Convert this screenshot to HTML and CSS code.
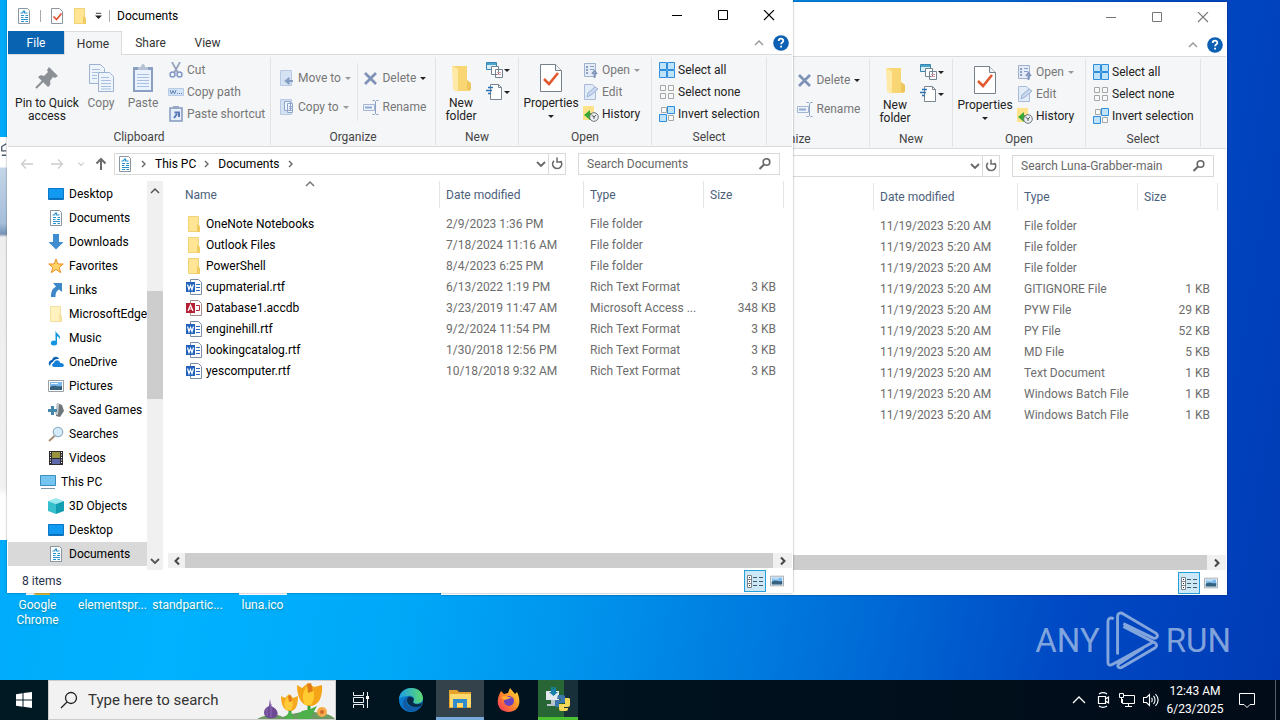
FILE: index.html
```html
<!DOCTYPE html>
<html lang="en">
<head>
<meta charset="utf-8">
<title>Documents</title>
<link rel="stylesheet" href="styles.css">
</head>
<body>
<svg class="sprite" aria-hidden="true">
  <symbol id="doc" viewBox="0 0 16 16"><path d="M2.500 .5h9l2 2v13h-11z" fill="#fff" stroke="#8a97a3"/><path d="M4.500 5h2l1-2h1v2h3M5 7.500h3M9.500 7.500h2.500M5 9.500h2.500M9 9.500h3M5 11.500h7M5 13.500h3M9.500 13.500h2.500" fill="none" stroke="#2a93cf" stroke-width="1.200"/></symbol>
  <symbol id="checkdoc" viewBox="0 0 24 30"><path d="M1.500 1.500h15l6 6v21h-21z" fill="#fff" stroke="#75808a"/><path d="M16.500 1.500v6h6" fill="#eef1f3" stroke="#75808a"/><path d="M5 16l5 5 9-11" fill="none" stroke="#e0592f" stroke-width="2.600"/></symbol>
  <symbol id="smallcheck" viewBox="0 0 16 16"><path d="M2.500 .5h8l3 3v12h-11z" fill="#fff" stroke="#8d969e"/><path d="M4.500 8.500l3 3 5-6" fill="none" stroke="#e2502f" stroke-width="1.700"/></symbol>
  <symbol id="folder" viewBox="0 0 16 16"><path d="M2 0h10v16H2z" fill="#ffe594"/><path d="M2.500 .5h10v15h-10z" fill="none" stroke="#f1d276"/><path d="M11 8l3 2v6h-3z" fill="#efcb62"/></symbol>
  <symbol id="bigfolder" viewBox="0 0 22 28"><path d="M2 1h15v15l3 6v4H5z" fill="#f7d673"/><path d="M2 1l6 3v23l-5-2.500z" fill="#ffe9a6"/><path d="M17 15l4 3v7h-4z" fill="#eec55a"/></symbol>
  <symbol id="pin" viewBox="0 0 24 24"><path d="M14 1l9 9-3 2-2-1-3 4c1 3 0 5-2 6L3 11c2-2 4-2 6-1l4-4-1-2z" fill="#8b9097"/><path d="M8 15L1 22" stroke="#8b9097" stroke-width="2"/></symbol>
  <symbol id="copy" viewBox="0 0 26 30"><g fill="#eef4fc" stroke="#9db2d3"><path d="M1.500 1.500h11l4 4v15h-15z"/><path d="M10.500 9.500h11l4 4v15h-15z"/></g><path d="M4 6.500h8M4 9.500h6M4 12.500h5M4 15.500h5M13 14.500h8M13 17.500h10M13 20.500h10M13 23.500h10M13 26h10" stroke="#a9bfdf"/></symbol>
  <symbol id="paste" viewBox="0 0 22 30"><path d="M1 4h20v25H1z" fill="#8b9fc2"/><path d="M3 7h16v20H3z" fill="#eaf2fd"/><path d="M5 11.500h12M5 14.500h12M5 17.500h12M5 20.500h12M5 23.500h12" stroke="#aac0df"/><path d="M6 4h3c0-4 4-4 4 0h3v3H6z" fill="#b6c2d5"/></symbol>
  <symbol id="cut" viewBox="0 0 16 16"><path d="M4 0l6 11M12 0L6 11" stroke="#93a2bd" stroke-width="1.700"/><circle cx="4.500" cy="12.500" r="2.500" fill="none" stroke="#8098c4" stroke-width="1.500"/><circle cx="11.500" cy="12.500" r="2.500" fill="none" stroke="#8098c4" stroke-width="1.500"/></symbol>
  <symbol id="path" viewBox="0 0 16 16"><path d="M.5 4.500h15v7H.5z" fill="#d4e4f7" stroke="#b7cbe6"/><path d="M2 6l1.500 4L5 6.500 6.500 10 8 6M9 9.500h1M11 9.500h1M13 9.500h1" fill="none" stroke="#6283b5"/></symbol>
  <symbol id="shortcut" viewBox="0 0 16 16"><path d="M2 2h12v13H2z" fill="#e5eefa" stroke="#8299bf" stroke-width="1.500"/><path d="M5 0h6v3H5z" fill="#97a8c6"/><path d="M6 12l3-4M6.500 6.500H11V11" stroke="#5678b4" stroke-width="2" fill="none"/></symbol>
  <symbol id="moveto" viewBox="0 0 16 16"><path d="M1 1h12v15H1z" fill="#d5e2f3"/><path d="M1.500 .5h11v15h-11z" fill="none" stroke="#b9cbe3"/><path d="M14 11H8M10.500 8L7 11l3.500 3" fill="none" stroke="#859dc3" stroke-width="2.200"/></symbol>
  <symbol id="copyto" viewBox="0 0 16 16"><path d="M1.500 .5h11v15h-11z" fill="#d5e2f3" stroke="#b9cbe3"/><path d="M5.500 2.500h6v9h-6zM8.500 4.500h5v9h-5z" fill="#f0f5fc" stroke="#8ea6cb"/><path d="M10 7.500h3M10 9.500h3M10 11.500h3" stroke="#8ea6cb"/></symbol>
  <symbol id="delete" viewBox="0 0 16 16"><path d="M2 3l11 11M13 3L2 14" stroke="#7f93b8" stroke-width="2.800"/></symbol>
  <symbol id="rename" viewBox="0 0 16 16"><path d="M.5 5.500h11v6H.5z" fill="#eef3fb" stroke="#a4b6d2"/><path d="M2 7.500h7v2H2z" fill="#91aad2"/><path d="M9.500 1.500h2l1 1 1-1h2M12.500 2.500v12M9.500 15.500h2l1-1 1 1h2" fill="none" stroke="#8ba2c8"/></symbol>
  <symbol id="newitem" viewBox="0 0 18 18"><path d="M.5 1.500h10v7H.5z" fill="#d9eff8" stroke="#3784b0"/><path d="M1 2h9v2H1z" fill="#4ba4cc"/><path d="M5.500 5.500h7v8h-7zM9.500 8.500h7v8h-7z" fill="#fff" stroke="#728494"/><path d="M11 11.500h4M11 13.500h4" stroke="#d398a5"/></symbol>
  <symbol id="easy" viewBox="0 0 18 18"><path d="M4.500 1.500h8l3 3v12h-11z" fill="#fff" stroke="#7a8792"/><path d="M12.500 1.500v3h3" fill="none" stroke="#7a8792"/><path d="M2 4.500h5M0 7.500h6M2 10.500h3" stroke="#2973b6" stroke-width="1.500"/></symbol>
  <symbol id="open" viewBox="0 0 16 16"><path d="M1.500 1.500h11v13h-11z" fill="#e5ecf6" stroke="#9fb1cd"/><path d="M3 4h2v2H3zM3 7h2v2H3zM3 10h2v2H3zM7 4h4v1H7zM7 7h4v1H7z" fill="#87a0c8"/><path d="M11.500 16v-5M9 12l2.500-3L14 12" stroke="#7f94bb" stroke-width="1.800" fill="none"/></symbol>
  <symbol id="edit" viewBox="0 0 16 16"><path d="M1.500 .5h8l3 3v12h-11z" fill="#e2ebf8" stroke="#a9bbd8"/><path d="M4 13l1-4 7-6 3 2-7 6z" fill="#c8d8ee" stroke="#9db2d4"/></symbol>
  <symbol id="history" viewBox="0 0 16 16"><path d="M0 0h11v14H0z" fill="#ffe38a"/><path d="M1 9l6-5v3c2 0 4 1 4 3l-4 1v3z" fill="#38a935"/><circle cx="11" cy="11" r="4.300" fill="#eceff1" stroke="#6b7479"/><path d="M8.500 9l2.500 2 2-2M11 11v2" fill="none" stroke="#555"/></symbol>
  <symbol id="selall" viewBox="0 0 16 16"><path d="M.5 .5h7v7h-7zM8.500 .5h7v7h-7zM.5 8.500h7v7h-7zM8.500 8.500h7v7h-7z" fill="#bfe3fb" stroke="#2f8ddb"/></symbol>
  <symbol id="selnone" viewBox="0 0 16 16"><path d="M1.500 1.500h5v5h-5zM9.500 1.500h5v5h-5zM1.500 9.500h5v5h-5zM9.500 9.500h5v5h-5z" fill="#fafafa" stroke="#a6a6a6"/></symbol>
  <symbol id="selinv" viewBox="0 0 16 16"><path d="M2.500 1.500h5v5h-5zM9.500 9.500h5v5h-5z" fill="#fafafa" stroke="#a6a6a6"/><path d="M8.500 .5h7v7h-7zM.5 8.500h7v7h-7z" fill="#bfe3fb" stroke="#2f8ddb"/></symbol>
  <symbol id="min" viewBox="0 0 12 12"><path d="M1 5.500h10" stroke="currentColor"/></symbol>
  <symbol id="max" viewBox="0 0 12 12"><path d="M1.500 .5h9v9h-9z" fill="none" stroke="currentColor"/></symbol>
  <symbol id="close" viewBox="0 0 12 12"><path d="M1 0l10 10M11 0L1 10" stroke="currentColor" stroke-width="1.100"/></symbol>
  <symbol id="up" viewBox="0 0 12 12"><path d="M2 8l4-4 4 4" fill="none" stroke="currentColor" stroke-width="1.500"/></symbol>
  <symbol id="down" viewBox="0 0 12 12"><path d="M2 4l4 4 4-4" fill="none" stroke="currentColor" stroke-width="1.800"/></symbol>
  <symbol id="left" viewBox="0 0 12 12"><path d="M8 2.500L4.500 6 8 9.500" fill="none" stroke="currentColor" stroke-width="2"/></symbol>
  <symbol id="right" viewBox="0 0 12 12"><path d="M4 2.500L7.500 6 4 9.500" fill="none" stroke="currentColor" stroke-width="2"/></symbol>
  <symbol id="crumb" viewBox="0 0 12 12"><path d="M4 3l3 3-3 3" fill="none" stroke="currentColor" stroke-width="1.400"/></symbol>
  <symbol id="caret" viewBox="0 0 8 8"><path d="M1 3h6L4 6z" fill="currentColor"/></symbol>
  <symbol id="qat" viewBox="0 0 8 10"><path d="M1 2.500h6" stroke="#222"/><path d="M0 5h8L4 9z" fill="#222"/></symbol>
  <symbol id="back" viewBox="0 0 16 16"><path d="M14 8H3M7 3.500L2.500 8 7 12.500" fill="none" stroke="currentColor" stroke-width="1.300"/></symbol>
  <symbol id="forward" viewBox="0 0 16 16"><path d="M2 8h11M9 3.500L13.500 8 9 12.500" fill="none" stroke="currentColor" stroke-width="1.300"/></symbol>
  <symbol id="upone" viewBox="0 0 16 16"><path d="M8 14V3M3.500 7.500L8 3l4.500 4.500" fill="none" stroke="#6b6b6b" stroke-width="2"/></symbol>
  <symbol id="refresh" viewBox="0 0 16 16"><path d="M11.500 5A4.500 4.500 0 1 1 5 4.800" fill="none" stroke="#6a6a6a" stroke-width="1.700"/><path d="M8 1.500V6H3.500" fill="none" stroke="#6a6a6a" stroke-width="1.500" transform="matrix(-1 0 0 1 16 0)"/></symbol>
  <symbol id="glass" viewBox="0 0 16 16"><circle cx="9.500" cy="6" r="3.300" fill="none" stroke="#666" stroke-width="1.600"/><path d="M7 8.500L2.500 13" stroke="#666" stroke-width="2"/></symbol>
  <symbol id="help" viewBox="0 0 16 16"><circle cx="8" cy="8" r="7.800" fill="#0b60b4"/><path d="M5.700 6c0-3 4.600-3 4.600-.3 0 1.600-2.200 1.700-2.200 3.600" fill="none" stroke="#fff" stroke-width="1.800"/><path d="M7.200 10.700h1.800v1.800H7.200z" fill="#fff"/></symbol>
  <symbol id="desk" viewBox="0 0 16 16"><path d="M.5 2.500h15v11H.5z" fill="#129af2" stroke="#0c75c4"/><path d="M1 12h14v1H1z" fill="#0a69b5"/></symbol>
  <symbol id="downarrow" viewBox="0 0 16 16"><path d="M5 0h6v8h4.500L8 15.500.5 8H5z" fill="#3f8ccf"/></symbol>
  <symbol id="star" viewBox="0 0 16 16"><path d="M8 1l2 5h5.300l-4.100 3.400 1.500 5.300L8 11.500l-4.700 3.200 1.500-5.300L.7 6H6z" fill="#ffd56a" stroke="#ed8d24"/></symbol>
  <symbol id="link" viewBox="0 0 16 16"><path d="M5 1h9v9l-3-2.500c-3 2-3.500 4-3.500 7.500H3c0-5 1-8 5-10.500z" fill="#3d86c8"/></symbol>
  <symbol id="palefolder" viewBox="0 0 16 16"><path d="M2.500 .5h10v15h-10z" fill="#fff2bf" stroke="#f3e1a0"/><path d="M11 8l3 2v6h-3z" fill="#f6e2a0"/></symbol>
  <symbol id="music" viewBox="0 0 16 16"><path d="M7.500 0c0 4 5.500 4 4.500 9.500-1-2.500-2-3-3-3V13H7.500z" fill="#1396e0"/><ellipse cx="6" cy="13" rx="3.200" ry="2.500" fill="#1396e0"/></symbol>
  <symbol id="cloud" viewBox="0 0 16 16"><path d="M2 12C-1 9 2 6 4 6c1-4 6-4 7-1-4-.5-6 2-6 3-2 .5-2.500 2-3 4z" fill="#0a62b8"/><path d="M6 13c-3-.5-2-4 0-4 1-4 6-3 6 0 4-.5 5 3 2.500 4z" fill="#1480d8"/></symbol>
  <symbol id="picture" viewBox="0 0 16 16"><path d="M.5 2.500h15v11H.5z" fill="#fff" stroke="#9aa0a6"/><path d="M2 4h12v8H2z" fill="#79b9ec"/><path d="M2 9c4-3 6 0 12-1v4H2z" fill="#35617c"/><path d="M3 5h7v1H3z" fill="#e8f5ff"/></symbol>
  <symbol id="games" viewBox="0 0 16 16"><path d="M9 1l5 2 2 6-4 6-4-1z" fill="#6e767c"/><path d="M9 1l2 1-1 11-3-1z" fill="#c2c8cc"/><path d="M0 7h3V4h3v3h3v3H6v3H3v-3H0z" fill="#4387ac"/></symbol>
  <symbol id="search2" viewBox="0 0 16 16"><circle cx="10" cy="6" r="4.700" fill="#d5edfb" stroke="#94b2c5" stroke-width="1.300"/><path d="M6.500 10L1 15" stroke="#a98d76" stroke-width="2"/></symbol>
  <symbol id="video" viewBox="0 0 16 16"><path d="M1 1h14v14H1z" fill="#2d2d30"/><path d="M4 2h8v6H4z" fill="#99933e"/><path d="M4 9h8v5H4z" fill="#5f68a8"/><path d="M2.500 2v12M13.500 2v12" stroke="#fff" stroke-dasharray="1 1.500"/></symbol>
  <symbol id="pc" viewBox="0 0 16 16"><path d="M.5 1.500h15v10H.5z" fill="#75c5f3" stroke="#3b8cb8"/><path d="M1 14h14v1H1z" fill="#7d99a9"/></symbol>
  <symbol id="cube" viewBox="0 0 16 16"><path d="M8 0l8 3-8 3-8-3z" fill="#9ce8ef"/><path d="M0 3l8 3v10l-8-3z" fill="#37bfce"/><path d="M16 3L8 6v10l8-3z" fill="#129eb2"/></symbol>
  <symbol id="word" viewBox="0 0 16 16"><path d="M4.500 .5h8l3 3v12h-11z" fill="#fff" stroke="#7d8da5"/><path d="M10 5.500h4M10 8.500h4M10 11.500h4" stroke="#2f68c0"/><path d="M0 3h9v10H0z" fill="#2262bd"/><path d="M1.500 5.500L3 10.500l1.500-4 1.500 4 1.500-5" fill="none" stroke="#fff" stroke-width="1.200"/></symbol>
  <symbol id="access" viewBox="0 0 16 16"><path d="M4.500 .5h8l3 3v12h-11z" fill="#fff" stroke="#a58a8d"/><path d="M10 5.500h3.500v5H10" fill="none" stroke="#b52b3a"/><path d="M0 3h9v10H0z" fill="#b51f34"/><path d="M2 11l2.500-6L7 11M3 9h3" fill="none" stroke="#fff" stroke-width="1.200"/></symbol>
  <symbol id="details" viewBox="0 0 18 16"><path d="M1.500 2.500h4v12h-4zM1.500 6.500h4M1.500 10.500h4" fill="#fff" stroke="#7b8289"/><path d="M7 4.500h4M13 4.500h4M7 8.500h4M13 8.500h4M7 12.500h4M13 12.500h4" stroke="#455a67"/><path d="M3 4h1v1H3zM3 8h1v1H3zM3 12h1v1H3z" fill="#333"/></symbol>
</svg>

<main class="desktop">
  <section class="sliver" aria-hidden="true"><svg viewBox="0 0 8 16"><path d="M7 1L2 4v5h5M2 14h5" fill="none" stroke="#4b5b69" stroke-width="1.500"/></svg></section>

  <div class="shortcuts">
    <div class="shortcut chrome">Google<br>Chrome</div>
    <div class="shortcut">elementspr...</div>
    <div class="shortcut">standpartic...</div>
    <div class="shortcut luna">luna.ico</div>
  </div>

  <div class="watermark"><span>ANY</span><svg viewBox="0 0 56 62"><path d="M8 8c-4-2-6 0-6 3v42c0 3 2 4 5 2l42-23M12 45V6c0-4 3-5 6-3l34 20c3 3 0 6-3 5L18 13M18 16l33 17c2 2 2 3 0 5L17 58c-3 2-6 0-4-3L39 38" fill="none" stroke="currentColor" stroke-width="3"/></svg><span>RUN</span></div>

  <section class="window behind" aria-label="Luna-Grabber-main">
    <header class="titlebar">
      <div class="winbuttons"><button aria-label="Minimize"><svg><use href="#min"/></svg></button><button aria-label="Maximize"><svg><use href="#max"/></svg></button><button aria-label="Close"><svg><use href="#close"/></svg></button></div>
    </header>
    <nav class="tabs"><div class="tabend"><svg class="i12"><use href="#up"/></svg><button aria-label="Help"><svg class="i16"><use href="#help"/></svg></button></div></nav>
    <div class="ribbon">
      <section class="group organize"><div class="body">
        <div class="stack wide"></div>
        <div class="stack wide second"><button class="dim"><svg class="i16"><use href="#delete"/></svg>Delete<svg class="i8 dark"><use href="#caret"/></svg></button><button class="dim"><svg class="i16"><use href="#rename"/></svg>Rename</button></div>
      </div><h2>Organize</h2></section>
      <section class="group new"><div class="body">
        <button class="big"><svg class="foldericon"><use href="#bigfolder"/></svg><span>New<br>folder</span></button>
        <div class="stack"><button aria-label="New item"><svg class="i18"><use href="#newitem"/></svg><svg class="i8"><use href="#caret"/></svg></button><button aria-label="Easy access"><svg class="i18"><use href="#easy"/></svg><svg class="i8"><use href="#caret"/></svg></button></div>
      </div><h2>New</h2></section>
      <section class="group opengroup"><div class="body">
        <button class="big"><svg class="largeicon"><use href="#checkdoc"/></svg><span>Properties</span><svg class="i8"><use href="#caret"/></svg></button>
        <div class="stack"><button class="dim"><svg class="i16"><use href="#open"/></svg>Open<svg class="i8"><use href="#caret"/></svg></button><button class="dim"><svg class="i16"><use href="#edit"/></svg>Edit</button><button><svg class="i16"><use href="#history"/></svg>History</button></div>
      </div><h2>Open</h2></section>
      <section class="group select"><div class="body">
        <div class="stack"><button><svg class="i16"><use href="#selall"/></svg>Select all</button><button><svg class="i16"><use href="#selnone"/></svg>Select none</button><button><svg class="i16"><use href="#selinv"/></svg>Invert selection</button></div>
      </div><h2>Select</h2></section>
    </div>
    <div class="location">
      <div class="address"><div class="crumbs"></div><button class="drop" aria-label="Previous locations"><svg class="i12"><use href="#down"/></svg></button><button class="refresh" aria-label="Refresh"><svg class="i16"><use href="#refresh"/></svg></button></div>
      <label class="find"><input type="search" aria-label="Search" placeholder="Search Luna-Grabber-main"><svg class="i16"><use href="#glass"/></svg></label>
    </div>
    <div class="content">
      <div class="tree"></div><div class="gutter"></div>
      <div class="files">
        <table>
          <thead><tr><th class="name"></th><th class="date">Date modified</th><th class="type">Type</th><th class="size">Size</th></tr></thead>
          <tbody>
            <tr><td></td><td>11/19/2023 5:20 AM</td><td>File folder</td><td></td></tr>
            <tr><td></td><td>11/19/2023 5:20 AM</td><td>File folder</td><td></td></tr>
            <tr><td></td><td>11/19/2023 5:20 AM</td><td>File folder</td><td></td></tr>
            <tr><td></td><td>11/19/2023 5:20 AM</td><td>GITIGNORE File</td><td>1 KB</td></tr>
            <tr><td></td><td>11/19/2023 5:20 AM</td><td>PYW File</td><td>29 KB</td></tr>
            <tr><td></td><td>11/19/2023 5:20 AM</td><td>PY File</td><td>52 KB</td></tr>
            <tr><td></td><td>11/19/2023 5:20 AM</td><td>MD File</td><td>5 KB</td></tr>
            <tr><td></td><td>11/19/2023 5:20 AM</td><td>Text Document</td><td>1 KB</td></tr>
            <tr><td></td><td>11/19/2023 5:20 AM</td><td>Windows Batch File</td><td>1 KB</td></tr>
            <tr><td></td><td>11/19/2023 5:20 AM</td><td>Windows Batch File</td><td>1 KB</td></tr>
          </tbody>
        </table>
        <div class="hscroll"><svg><use href="#left"/></svg><div class="thumb"></div><svg><use href="#right"/></svg></div>
      </div>
    </div>
    <footer class="status"><span></span><button class="view on" aria-label="Details view"><svg class="i18"><use href="#details"/></svg></button><button class="view" aria-label="Large icons view"><svg class="i16"><use href="#picture"/></svg></button></footer>
  </section>

  <section class="window front" aria-label="Documents">
    <header class="titlebar">
      <svg class="i16"><use href="#doc"/></svg><i class="sep"></i><svg class="i16 quick"><use href="#smallcheck"/></svg><svg class="i16 quick"><use href="#folder"/></svg><svg class="qat"><use href="#qat"/></svg><i class="sep last"></i><h1>Documents</h1>
      <div class="winbuttons"><button aria-label="Minimize"><svg><use href="#min"/></svg></button><button aria-label="Maximize"><svg><use href="#max"/></svg></button><button aria-label="Close"><svg><use href="#close"/></svg></button></div>
    </header>
    <nav class="tabs"><button class="file">File</button><button class="active">Home</button><button class="plain">Share</button><button class="plain">View</button><div class="tabend"><svg class="i12"><use href="#up"/></svg><button aria-label="Help"><svg class="i16"><use href="#help"/></svg></button></div></nav>
    <div class="ribbon">
      <section class="group clipboard"><div class="body">
        <button class="big pin"><svg class="largeicon"><use href="#pin"/></svg><span>Pin to Quick<br>access</span></button>
        <button class="big dim clip"><svg class="largeicon"><use href="#copy"/></svg><span>Copy</span></button>
        <button class="big dim clip"><svg class="largeicon"><use href="#paste"/></svg><span>Paste</span></button>
        <div class="stack"><button class="dim"><svg class="i16"><use href="#cut"/></svg>Cut</button><button class="dim"><svg class="i16"><use href="#path"/></svg>Copy path</button><button class="dim"><svg class="i16"><use href="#shortcut"/></svg>Paste shortcut</button></div>
      </div><h2>Clipboard</h2></section>
      <section class="group organize"><div class="body">
        <div class="stack wide"><button class="dim"><svg class="i16"><use href="#moveto"/></svg>Move to<svg class="i8"><use href="#caret"/></svg></button><button class="dim"><svg class="i16"><use href="#copyto"/></svg>Copy to<svg class="i8"><use href="#caret"/></svg></button></div>
        <div class="stack wide second"><button class="dim"><svg class="i16"><use href="#delete"/></svg>Delete<svg class="i8 dark"><use href="#caret"/></svg></button><button class="dim"><svg class="i16"><use href="#rename"/></svg>Rename</button></div>
      </div><h2>Organize</h2></section>
      <section class="group new"><div class="body">
        <button class="big"><svg class="foldericon"><use href="#bigfolder"/></svg><span>New<br>folder</span></button>
        <div class="stack"><button aria-label="New item"><svg class="i18"><use href="#newitem"/></svg><svg class="i8"><use href="#caret"/></svg></button><button aria-label="Easy access"><svg class="i18"><use href="#easy"/></svg><svg class="i8"><use href="#caret"/></svg></button></div>
      </div><h2>New</h2></section>
      <section class="group opengroup"><div class="body">
        <button class="big"><svg class="largeicon"><use href="#checkdoc"/></svg><span>Properties</span><svg class="i8"><use href="#caret"/></svg></button>
        <div class="stack"><button class="dim"><svg class="i16"><use href="#open"/></svg>Open<svg class="i8"><use href="#caret"/></svg></button><button class="dim"><svg class="i16"><use href="#edit"/></svg>Edit</button><button><svg class="i16"><use href="#history"/></svg>History</button></div>
      </div><h2>Open</h2></section>
      <section class="group select"><div class="body">
        <div class="stack"><button><svg class="i16"><use href="#selall"/></svg>Select all</button><button><svg class="i16"><use href="#selnone"/></svg>Select none</button><button><svg class="i16"><use href="#selinv"/></svg>Invert selection</button></div>
      </div><h2>Select</h2></section>
    </div>
    <div class="location">
      <div class="arrows"><button aria-label="Back"><svg class="i16"><use href="#back"/></svg></button><button aria-label="Forward"><svg class="i16"><use href="#forward"/></svg></button><button class="recent" aria-label="Recent"><svg class="i8"><use href="#down"/></svg></button><button aria-label="Up"><svg class="i16"><use href="#upone"/></svg></button></div>
      <div class="address"><div class="crumbs"><svg class="i16"><use href="#doc"/></svg><svg class="i12"><use href="#crumb"/></svg><a href="#">This PC</a><svg class="i12"><use href="#crumb"/></svg><a href="#">Documents</a><svg class="i12"><use href="#crumb"/></svg></div><button class="drop" aria-label="Previous locations"><svg class="i12"><use href="#down"/></svg></button><button class="refresh" aria-label="Refresh"><svg class="i16"><use href="#refresh"/></svg></button></div>
      <label class="find"><input type="search" aria-label="Search" placeholder="Search Documents"><svg class="i16"><use href="#glass"/></svg></label>
    </div>
    <div class="content">
      <nav class="tree">
        <a href="#"><svg class="i16"><use href="#desk"/></svg>Desktop</a>
        <a href="#"><svg class="i16"><use href="#doc"/></svg>Documents</a>
        <a href="#"><svg class="i16"><use href="#downarrow"/></svg>Downloads</a>
        <a href="#"><svg class="i16"><use href="#star"/></svg>Favorites</a>
        <a href="#"><svg class="i16"><use href="#link"/></svg>Links</a>
        <a href="#"><svg class="i16"><use href="#palefolder"/></svg>MicrosoftEdge</a>
        <a href="#"><svg class="i16"><use href="#music"/></svg>Music</a>
        <a href="#"><svg class="i16"><use href="#cloud"/></svg>OneDrive</a>
        <a href="#"><svg class="i16"><use href="#picture"/></svg>Pictures</a>
        <a href="#"><svg class="i16"><use href="#games"/></svg>Saved Games</a>
        <a href="#"><svg class="i16"><use href="#search2"/></svg>Searches</a>
        <a href="#"><svg class="i16"><use href="#video"/></svg>Videos</a>
        <a href="#" class="root"><svg class="i16"><use href="#pc"/></svg>This PC</a>
        <a href="#"><svg class="i16"><use href="#cube"/></svg>3D Objects</a>
        <a href="#"><svg class="i16"><use href="#desk"/></svg>Desktop</a>
        <a href="#" class="current"><svg class="i16"><use href="#doc"/></svg>Documents</a>
      </nav>
      <div class="vscroll"><svg><use href="#up"/></svg><div class="track"><div class="thumb"></div></div><svg><use href="#down"/></svg></div>
      <div class="files">
        <table>
          <thead><tr><th class="name">Name<svg class="sort"><use href="#up"/></svg></th><th class="date">Date modified</th><th class="type">Type</th><th class="size">Size</th></tr></thead>
          <tbody>
            <tr><td><svg class="i16"><use href="#folder"/></svg>OneNote Notebooks</td><td>2/9/2023 1:36 PM</td><td>File folder</td><td></td></tr>
            <tr><td><svg class="i16"><use href="#folder"/></svg>Outlook Files</td><td>7/18/2024 11:16 AM</td><td>File folder</td><td></td></tr>
            <tr><td><svg class="i16"><use href="#folder"/></svg>PowerShell</td><td>8/4/2023 6:25 PM</td><td>File folder</td><td></td></tr>
            <tr><td><svg class="i16"><use href="#word"/></svg>cupmaterial.rtf</td><td>6/13/2022 1:19 PM</td><td>Rich Text Format</td><td>3 KB</td></tr>
            <tr><td><svg class="i16"><use href="#access"/></svg>Database1.accdb</td><td>3/23/2019 11:47 AM</td><td>Microsoft Access ...</td><td>348 KB</td></tr>
            <tr><td><svg class="i16"><use href="#word"/></svg>enginehill.rtf</td><td>9/2/2024 11:54 PM</td><td>Rich Text Format</td><td>3 KB</td></tr>
            <tr><td><svg class="i16"><use href="#word"/></svg>lookingcatalog.rtf</td><td>1/30/2018 12:56 PM</td><td>Rich Text Format</td><td>3 KB</td></tr>
            <tr><td><svg class="i16"><use href="#word"/></svg>yescomputer.rtf</td><td>10/18/2018 9:32 AM</td><td>Rich Text Format</td><td>3 KB</td></tr>
          </tbody>
        </table>
        <div class="hscroll"><svg><use href="#left"/></svg><div class="thumb"></div><svg><use href="#right"/></svg></div>
      </div>
    </div>
    <footer class="status"><span>8 items</span><button class="view on" aria-label="Details view"><svg class="i18"><use href="#details"/></svg></button><button class="view" aria-label="Large icons view"><svg class="i16"><use href="#picture"/></svg></button></footer>
  </section>
</main>

<footer class="taskbar">
  <button class="start" aria-label="Start"><svg class="i16" viewBox="0 0 16 16"><path d="M0 2.300L6.500 1.300V7.500H0zM7.500 1.100L16 0v7.500H7.500zM0 8.500h6.500v6.200L0 13.700zM7.500 8.500H16V16l-8.500-1.200z" fill="#fff"/></svg></button>
  <label class="searchbox"><svg class="i18" viewBox="0 0 18 18"><circle cx="11" cy="7" r="5.500" fill="none" stroke="#222" stroke-width="1.300"/><path d="M7 11l-6 6" stroke="#222" stroke-width="1.300"/></svg><input type="text" aria-label="Type here to search" placeholder="Type here to search">
    <svg class="flowers" viewBox="0 0 78 38"><path d="M0 38c10-5 18-6 26-2 10-6 44-8 52 2z" fill="#6c9a61"/><path d="M33 37V22M52 37V18" stroke="#33a042" stroke-width="3"/><path d="M27 38l6-8 5 8zM40 38c1-7 5-9 11-9l9-4-7 13z" fill="#4db04a"/><path d="M13 18l1 7c8 3 9 11 2 12-10 2-12-9-4-12z" fill="#6e4a95"/><path d="M14 23v13M10 27v8" stroke="#8e6cb4"/><path d="M24 15l4 2 4-4 4 4 5-2c0 9-2 15-8 15s-9-6-9-15z" fill="#f6a91d"/><path d="M29 29c-3-5-2-10 3-15 4 5 5 10 2 15z" fill="#ffcb3b"/><path d="M40 4l5 3 6-5 6 4 8-2c1 13-4 21-12 21S40 17 40 4z" fill="#f5a417"/><path d="M48 24c-4-8-2-15 4-22 6 7 7 15 2 22z" fill="#ffcb30"/><path d="M50 3l4-1 2 8-5 2zM31 15l3-1 1 6-3 1z" fill="#e27b17"/><circle cx="65" cy="31" r="5" fill="#f6ab4a"/><circle cx="65" cy="31" r="2" fill="#cf6828"/></svg></label>
  <button class="app" aria-label="Task view"><svg class="i18" viewBox="0 0 18 18"><path d="M1.500 1v3.500h10V1M1.500 17v-3.500h10V17M1.500 6.500h10v5h-10zM15.500 1v16" fill="none" stroke="#e8eef1"/><path d="M14 5h3v3h-3z" fill="#fff"/></svg></button>
  <button class="app" aria-label="Microsoft Edge"><svg class="i24" viewBox="0 0 24 24"><defs><linearGradient id="edgetop"><stop stop-color="#1d9de3"/><stop offset="1" stop-color="#5edb72"/></linearGradient></defs><circle cx="12" cy="12" r="12" fill="#087bce"/><path d="M0 11C1-3 23-4 24 10c0 6-8 7-10 4 3-3 0-7-5-6-4 0-7 1-9 3z" fill="url(#edgetop)"/><path d="M9 9c-5 7 2 13 13 9-5 9-19 6-18-3 0-3 2-5 5-6z" fill="#125ba5"/><path d="M9 9c5-1 7 2 5 5 1 3 7 3 9 0l-1 4c-9 3-17-2-13-9z" fill="#092b45"/></svg></button>
  <button class="app explorer" aria-label="File Explorer"><svg class="i24" viewBox="0 0 24 24"><path d="M1 3h8l2 2h12v16H1z" fill="#e7a42d"/><path d="M2 7h21v13H2z" fill="#ffda6e"/><path d="M5 12h14v9h-4v-5H9v5H5z" fill="#328ccc"/></svg></button>
  <button class="app" aria-label="Firefox"><svg class="i24" viewBox="0 0 24 24"><defs><linearGradient id="fox" x1="0" y1="1" x2="1" y2="0"><stop stop-color="#f32a61"/><stop offset=".5" stop-color="#ff8a28"/><stop offset="1" stop-color="#ffe43b"/></linearGradient></defs><path d="M4 3l3 3 4-1 2-5 5 6 2-2c4 8 4 19-8 20C0 24-2 13 4 3z" fill="url(#fox)"/><circle cx="12" cy="13" r="5" fill="#6943bf"/><path d="M4 9c5-2 8 0 11 1-3 0-5 2-8 2z" fill="#ffac30"/></svg></button>
  <button class="app python" aria-label="Python"><svg class="i24" viewBox="0 0 24 24"><path d="M0 4h13v9H0z" fill="#e3e9ed"/><path d="M5 13h4v4h3v2H1v-2h4z" fill="#bac5cc"/><path d="M5 0h2v2h1V0h2v5h2L7.500 9 3 5h2z" fill="#1681a8"/><path d="M12 8h5a2 2 0 0 1 2 2v6h-6v4h-2a2 2 0 0 1-2-3v-4h6v-1h-4z" fill="#3d78ad"/><path d="M19 11h3a2 2 0 0 1 2 3v4a2 2 0 0 1-2 2h-4v1h4v1a2 2 0 0 1-2 2h-5a2 2 0 0 1-2-2v-5h6z" fill="#f7d856"/></svg></button>
  <div class="tray">
    <button aria-label="Show hidden icons"><svg class="i16" viewBox="0 0 16 16"><path d="M2 11l6-6 6 6" fill="none" stroke="#fff" stroke-width="1.300"/></svg></button>
    <button aria-label="Meet now"><svg class="i16" viewBox="0 0 16 16"><path d="M3.500 4.500h7v7h-7zM10.500 7l3-2v6l-3-2M4 2c3-2 5-2 8 0M4 14c3 2 5 2 8 0" fill="none" stroke="#fff" stroke-width="1.200"/></svg></button>
    <button aria-label="Network"><svg class="i16" viewBox="0 0 16 16"><path d="M5 3.500h10.500v8H3.500V7M9.500 11.500v3M6 14.500h7M.5 1.500h4v4h-4zM2.500 5v6" fill="none" stroke="#fff"/></svg></button>
    <button aria-label="Volume"><svg class="i16" viewBox="0 0 16 16"><path d="M.5 5.500h3l3-3v11l-3-3h-3zM8.500 6c1 1 1 3 0 4M10.500 4c2 2 2 6 0 8M12.500 2c3.500 4 3.500 8 0 12" fill="none" stroke="#fff" stroke-width="1.100"/></svg></button>
    <div class="clock"><span>12:43 AM</span><span>6/23/2025</span></div>
    <button class="notice" aria-label="Notifications"><svg class="i18" viewBox="0 0 18 18"><path d="M1.500 2.500h15v11H12l-3 3-3-3H1.500z" fill="none" stroke="#fff"/></svg></button>
    <i class="peek"></i>
  </div>
</footer>
</body>
</html>
```
FILE: styles.css
```css
* { box-sizing: border-box; }
body { margin: 0; height: 100vh; display: flex; flex-direction: column; overflow: hidden; font: 12px/16px Roboto, "Noto Sans", sans-serif; color: #000; }
button { border: 0; margin: 0; padding: 0; background: none; font: inherit; color: inherit; white-space: nowrap; }
input { min-width: 0; border: 0; padding: 0; background: none; font: inherit; outline: 0; }
input::placeholder { color: #686868; opacity: 1; }
a { color: inherit; text-decoration: none; }
h1, h2 { margin: 0; font: inherit; }
svg { flex: none; display: block; }
.sprite { display: none; }
.i8 { width: 8px; height: 8px; }
.i12 { width: 12px; height: 12px; }
.i16 { width: 16px; height: 16px; }
.i18 { width: 18px; height: 18px; }
.i24 { width: 24px; height: 24px; }

.desktop { position: relative; flex: 1; overflow: hidden; background: linear-gradient(100deg, #00a8f8 0, #00b2ff 20%, #00a8f8 36%, #0096ee 48%, #006fd8 68%, #0049c4 84%, #003bb5 100%); }
.sliver { position: absolute; left: 0; top: 137px; width: 7px; height: 403px; padding-top: 5px; background: linear-gradient(#fff 0, #fff 30px, #c4d5e7 31px, #a6bfdb 86px, #7592b5 97px, #eee 100px, #f1f1f1 350px, #fff 360px); }
.sliver svg { width: 7px; height: 16px; }

.window { position: absolute; display: flex; flex-direction: column; width: 786px; background: #fff; border: solid #fff; border-width: 0 1px; box-shadow: 0 0 2px #0006; }
.front { left: 7px; top: 0; }
.behind { left: 441px; top: 2px; }

.titlebar { display: flex; align-items: center; height: 31px; padding-left: 8px; }
.sep { width: 1px; height: 12px; margin: 0 8px; background: #aaa; }
.quick { margin-right: 7px; }
.qat { width: 7px; height: 9px; }
.sep.last { margin: 0 7px; }
.winbuttons { display: flex; margin-left: auto; }
.winbuttons button { display: grid; place-items: center; width: 46px; height: 30px; }
.winbuttons svg { width: 12px; height: 12px; }
.behind .winbuttons { color: #777; }

.tabs { display: flex; align-items: stretch; height: 24px; border-bottom: 1px solid #dadbdc; color: #333; }
.tabs > .file { width: 56px; color: #fff; background: #0963b0; }
.tabs > .active { width: 58px; height: 24px; border: solid #dadbdc; border-width: 1px 1px 0; background: #f5f6f7; }
.tabs > .plain { width: 57px; }
.tabend { display: flex; align-items: center; gap: 8px; margin-left: auto; padding-right: 3px; color: #999; }

.ribbon { display: flex; height: 92px; padding: 2px 0 1px; background: #f5f6f7; border-bottom: 1px solid #dadbdc; color: #222; }
.behind .ribbon { padding-left: 263px; }
.group { display: flex; flex-direction: column; border-right: 1px solid #e2e3e4; }
.group h2 { text-align: center; color: #444; }
.body { display: flex; flex: 1; padding-top: 2px; }
.clipboard { width: 263px; }
.organize { width: 165px; }
.new { width: 83px; }
.opengroup { width: 133px; }
.select { width: 115px; }
.big { display: flex; flex-direction: column; align-items: center; justify-content: flex-start; width: 64px; padding-top: 4px; line-height: 13px; }
.big span { padding-top: 4px; }
.big .i8 { margin-top: 2px; }
.new .big { width: 50px; }
.largeicon { width: 28px; height: 30px; }
.pin { width: 78px; }
.pin .largeicon { padding: 2px; }
.foldericon { width: 22px; height: 30px; padding-top: 2px; }
.clip { width: 42px; }
.pin + .clip { margin-left: -6px; }
.dim { color: #777; }
.stack { display: flex; flex-direction: column; align-items: flex-start; padding-left: 2px; }
.stack button { display: flex; align-items: center; gap: 3px; height: 22px; }
.clipboard .stack { padding-left: 4px; }
.opengroup .stack { padding-left: 0; }
.select .stack { padding-left: 7px; }
.wide { width: 87px; height: 58px; padding-left: 8px; margin-top: 4px; }
.wide button { height: 29px; }
.second { width: 78px; padding-left: 5px; border-left: 1px solid #e2e3e4; }
.stack .i8 { color: #999; }
.stack .dark, .new .stack .i8 { color: #222; }
.stack .i18 + .i8 { margin-left: -4px; }
.new .stack { padding-left: 0; }

.location { display: flex; align-items: center; height: 34px; padding-right: 12px; gap: 12px; }
.arrows { display: flex; align-items: center; gap: 14px; width: 94px; padding-left: 11px; color: #ccc; }
.arrows .recent { margin: 0 -6px 0 -2px; }
.address { display: flex; flex: 1; height: 22px; border: 1px solid #d9d9d9; }
.crumbs { display: flex; flex: 1; align-items: center; padding-left: 2px; gap: 5px; }
.crumbs .i12 { color: #666; }
.drop { display: grid; place-items: center; width: 14px; color: #666; }
.refresh { display: grid; place-items: center; width: 17px; border-left: 1px solid #d9d9d9; }
.find { display: flex; align-items: center; width: 202px; height: 22px; padding: 0 6px 0 8px; border: 1px solid #d9d9d9; }
.find input { flex: 1; }

.content { display: flex; height: 389px; }
.tree { width: 139px; padding-top: 1px; overflow: hidden; }
.tree a { display: flex; align-items: center; gap: 5px; height: 24px; padding-left: 40px; white-space: nowrap; }
.tree .root { padding-left: 32px; }
.tree .current { background: #d9d9d9; }
.vscroll, .gutter { width: 16px; }
.vscroll { display: flex; flex-direction: column; align-items: center; padding: 4px 0 3px; background: #f0f0f0; color: #555; }
.vscroll svg, .hscroll svg { width: 12px; height: 12px; }
.track { flex: 1; align-self: stretch; padding-top: 94px; }
.track .thumb { height: 108px; background: #cdcdcd; }
.files { display: flex; flex: 1; flex-direction: column; padding-left: 5px; min-width: 0; }
table { width: 605px; margin-left: 11px; border-spacing: 0; table-layout: fixed; }
th { position: relative; height: 27px; padding: 0 6px; border-right: 1px solid #e5e5e5; font-weight: 400; text-align: left; color: #4c607a; }
.name { width: 261px; }
.date { width: 144px; }
.type { width: 120px; }
.sort { position: absolute; left: 125px; top: -3px; width: 12px; height: 12px; color: #777; }
td { height: 21px; padding: 0 6px; color: #6d6d6d; white-space: nowrap; }
td:first-child { display: flex; align-items: center; gap: 4px; padding-left: 7px; color: #000; }
td:last-child { padding-right: 8px; text-align: right; }
tbody::before { content: ""; display: block; height: 5px; }
.hscroll { display: flex; align-items: center; height: 15px; margin: auto 0 2px; padding: 0 3px; gap: 2px; background: #f0f0f0; color: #444; }
.hscroll .thumb { flex: 1; height: 15px; background: #cdcdcd; }
.hscroll svg:last-child { margin-left: 2px; }

.status { display: flex; align-items: flex-start; height: 23px; padding: 0 4px 0 14px; color: #24314b; }
.status span { flex: 1; padding-top: 3px; }
.view { display: grid; place-items: center; width: 22px; height: 22px; }
.view.on { background: #cce8f6; border: 1px solid #26a0da; }
.view .i16 { width: 14px; }

.shortcuts { position: absolute; left: 0; top: 592px; display: flex; color: #fff; text-align: center; text-shadow: 0 1px 2px #0648; line-height: 15px; }
.shortcut { width: 75px; }
.shortcut::before { content: ""; display: block; width: 48px; height: 3px; margin: 0 auto 3px; }
.chrome::before { width: 24px; background: linear-gradient(90deg, #fff 30%, #d6b53a 40%); }
.luna::before { background: #fff; }

.watermark { position: absolute; right: 49px; bottom: 8px; display: flex; align-items: center; gap: 6px; color: #a4bee4cc; font: 33px/62px Roboto, sans-serif; }
.watermark svg { width: 54px; height: 62px; }

.taskbar { display: flex; height: 40px; background: linear-gradient(90deg, #011923, #00111d 60%, #020b18); color: #fff; }
.taskbar > button { display: grid; place-items: center; width: 48px; }
.searchbox { display: flex; align-items: center; gap: 10px; width: 288px; padding-left: 11px; background: #f2f2f2; border: 1px solid #ccc; }
.searchbox input { flex: 1; font-size: 15px; }
.searchbox input::placeholder { color: #333; }
.flowers { width: 78px; height: 38px; }
.taskbar > .app { width: 50px; }
.taskbar > .explorer { width: 48px; background: #34434b; border-bottom: 3px solid #76a9dc; }
.taskbar > .python { width: 40px; margin-left: 4px; background: linear-gradient(90deg, #286735 66%, #173039 66%); border-bottom: 3px solid #4bbf32; }
.tray { display: flex; align-items: center; margin-left: auto; }
.tray button { display: grid; place-items: center; width: 24px; height: 40px; }
.clock { display: flex; flex-direction: column; width: 64px; text-align: center; line-height: 18px; }
.tray .notice { width: 40px; }
.peek { width: 1px; height: 40px; margin: 0 4px 0 8px; background: #52616b; }
```
